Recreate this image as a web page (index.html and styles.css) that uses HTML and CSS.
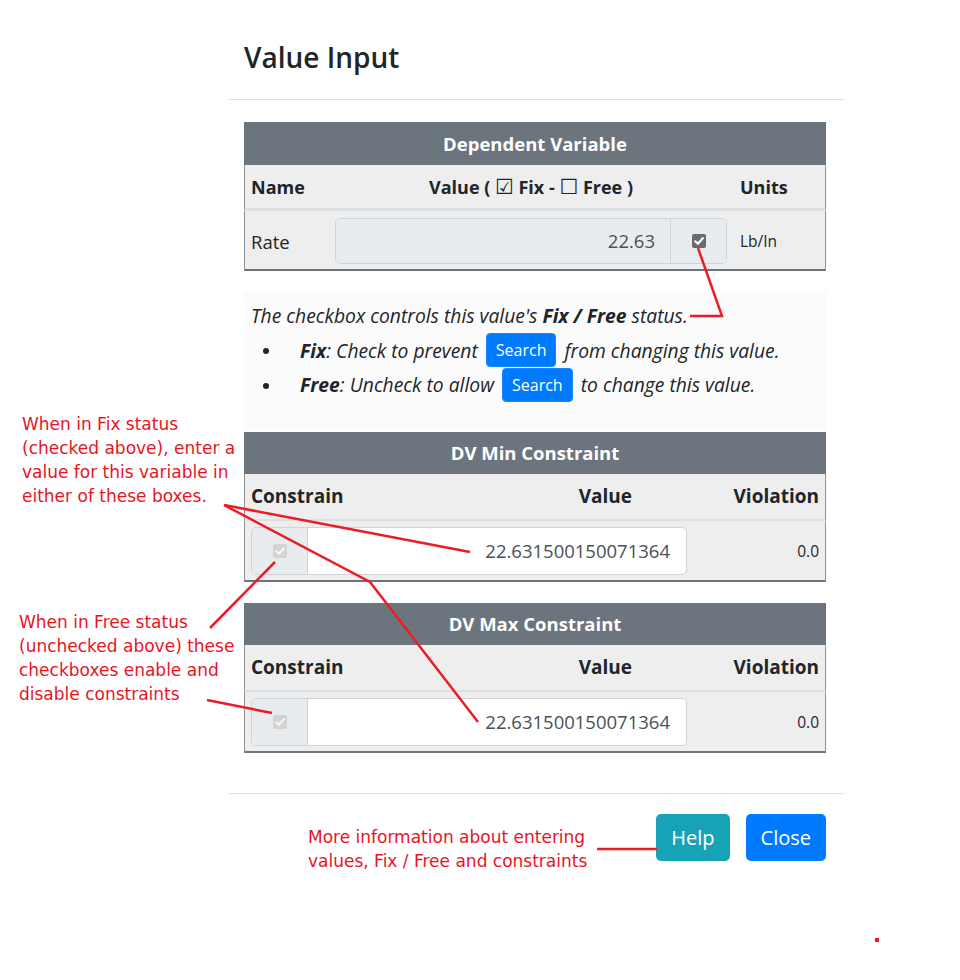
FILE: index.html
```html
<!DOCTYPE html>
<html>
<head>
<meta charset="utf-8">
<link rel="stylesheet" href="styles.css">
</head>
<body>
<div class="modal">
  <div class="modal-header"><h5 class="modal-title">Value Input</h5></div>
  <div class="modal-body">
    <div class="tbl">
      <div class="sec-title">Dependent Variable</div>
      <div class="thead dv-grid">
        <div class="c-name">Name</div>
        <div class="c-val">Value ( <span class="glyph">☑</span> Fix - <span class="glyph">☐</span> Free )</div>
        <div class="c-units">Units</div>
      </div>
      <div class="tbody dv-grid">
        <div class="c-name name">Rate</div>
        <div class="c-val">
          <div class="igroup">
            <div class="ifield disabled">22.63</div>
            <div class="addon addon-r"><span class="cb cb-on"><svg viewBox="0 0 14 14" width="14" height="14"><path d="M3.2 7.3 L5.9 9.8 L10.8 4.2" fill="none" stroke="#fff" stroke-width="2.2" stroke-linecap="round" stroke-linejoin="round"/></svg></span></div>
          </div>
        </div>
        <div class="c-units units">Lb/In</div>
      </div>
    </div>

    <div class="explain">
      <p class="ex-p">The checkbox controls this value's <b>Fix / Free</b> status.</p>
      <ul class="ex-list">
        <li><b>Fix</b>: Check to prevent <span class="btn-sm">Search</span> from changing this value.</li>
        <li><b>Free</b>: Uncheck to allow <span class="btn-sm">Search</span> to change this value.</li>
      </ul>
    </div>

    <div class="tbl tbl-c">
      <div class="sec-title">DV Min Constraint</div>
      <div class="thead c-grid">
        <div class="h-con">Constrain</div>
        <div class="h-val">Value</div>
        <div class="h-vio">Violation</div>
      </div>
      <div class="tbody c-grid c-body">
        <div class="igroup ig-c">
          <div class="addon addon-l"><span class="cb cb-dis"><svg viewBox="0 0 14 14" width="14" height="14"><path d="M3.2 7.3 L5.9 9.8 L10.8 4.2" fill="none" stroke="#f4f4f4" stroke-width="2.2" stroke-linecap="round" stroke-linejoin="round"/></svg></span></div>
          <div class="ifield">22.631500150071364</div>
        </div>
        <div class="vio">0.0</div>
      </div>
    </div>

    <div class="tbl tbl-c tbl-max">
      <div class="sec-title">DV Max Constraint</div>
      <div class="thead c-grid">
        <div class="h-con">Constrain</div>
        <div class="h-val">Value</div>
        <div class="h-vio">Violation</div>
      </div>
      <div class="tbody c-grid c-body">
        <div class="igroup ig-c">
          <div class="addon addon-l"><span class="cb cb-dis"><svg viewBox="0 0 14 14" width="14" height="14"><path d="M3.2 7.3 L5.9 9.8 L10.8 4.2" fill="none" stroke="#f4f4f4" stroke-width="2.2" stroke-linecap="round" stroke-linejoin="round"/></svg></span></div>
          <div class="ifield">22.631500150071364</div>
        </div>
        <div class="vio">0.0</div>
      </div>
    </div>
  </div>
  <div class="modal-footer">
    <span class="btn btn-help">Help</span>
    <span class="btn btn-close">Close</span>
  </div>
</div>

<div class="note note-fix">When in Fix status<br>(checked above), enter a<br>value for this variable in<br>either of these boxes.</div>
<div class="note note-free">When in Free status<br>(unchecked above) these<br>checkboxes enable and<br>disable constraints</div>
<div class="note note-help">More information about entering<br>values, Fix / Free and constraints</div>

<svg class="arrows" width="960" height="980" viewBox="0 0 960 980">
  <g fill="none" stroke="#ed1c24" stroke-width="2.5" stroke-linejoin="miter">
    <path d="M698 248 L722 316 L690 316"/>
    <path d="M224 505 L470 552"/>
    <path d="M224 505 L370 582 L478 722"/>
    <path d="M275 562 L210 628"/>
    <path d="M207 700 L272 713"/>
    <path d="M597 849 L657 849"/>
  </g>
  <rect x="875" y="938" width="4" height="4" fill="#ed1c24"/>
</svg>
</body>
</html>
```
FILE: styles.css
```css
html, body {
  margin: 0;
  padding: 0;
  background: #ffffff;
}
body {
  position: relative;
  width: 960px;
  height: 980px;
  font-family: "Open Sans", "Noto Sans", sans-serif;
  font-size: 18px;
  color: #212529;
}
.modal {
  margin-left: 228px;
  width: 617px;
}
.modal-header {
  height: 100px;
  border-bottom: 1px solid #dee2e6;
  padding: 0 16px;
  box-sizing: border-box;
}
.modal-title {
  margin: 0;
  padding-top: 39px;
  font-size: 28px;
  line-height: 36px;
  font-weight: 600;
  color: #212529;
}
.modal-body {
  padding: 22px 19px 40px 16px;
}
.tbl {
  width: 582px;
}
.sec-title {
  background: #6c757d;
  color: #ffffff;
  font-weight: 700;
  text-align: center;
  font-size: 18.5px;
  height: 43px;
  line-height: 43px;
}
.thead {
  background: #eeeeee;
  border-left: 1px solid #8e9397;
  border-right: 1px solid #8e9397;
  border-bottom: 3px solid #dde0e3;
  height: 43px;
  font-weight: 700;
  align-items: center;
}
.tbody {
  background: #eeeeee;
  border-left: 1px solid #8e9397;
  border-right: 1px solid #8e9397;
  border-bottom: 2px solid #6c757d;
  align-items: center;
}
.dv-grid {
  display: grid;
  grid-template-columns: 90px 392px 1fr;
}
.dv-grid .c-name { padding-left: 6px; }
.dv-grid .c-val { text-align: center; }
.dv-grid .c-units { padding-left: 13px; }
.glyph {
  font-family: "DejaVu Sans", sans-serif;
  font-weight: 400;
  font-size: 21px;
}
.dv-grid.tbody {
  padding: 7px 0 5px;
}
.name { font-weight: 400; font-size: 18.5px; }
.units { font-size: 15.5px; }
.igroup {
  display: flex;
  height: 46px;
  border: 1px solid #ced4da;
  border-radius: 5px;
  box-sizing: border-box;
  overflow: hidden;
  background: #ffffff;
}
.ifield {
  flex: 1;
  text-align: right;
  padding-right: 15px;
  line-height: 44px;
  font-size: 18.5px;
  color: #495057;
}
.ifield.disabled {
  background: #e9ecef;
}
.addon {
  width: 55px;
  background: #e9ecef;
  display: flex;
  align-items: center;
  justify-content: center;
}
.addon-r { border-left: 1px solid #ced4da; }
.addon-l { border-right: 1px solid #ced4da; }
.cb {
  width: 14px;
  height: 14px;
  border-radius: 2px;
  display: block;
}
.cb svg { display: block; }
.cb-on { background: #6b6b6b; }
.cb-dis { background: #d3d3d3; }

.explain {
  margin-top: 20px;
  background: #fbfbfb;
  padding: 8px 7px 27px;
  font-style: italic;
  font-size: 19.3px;
  line-height: 34.5px;
}
.ex-p { margin: 0; }
.ex-list {
  margin: 0;
  padding-left: 12px;
  list-style: none;
}
.ex-list li::before {
  content: "";
  display: inline-block;
  width: 6px;
  height: 6px;
  border-radius: 50%;
  background: #212529;
  margin-right: 31px;
  vertical-align: middle;
  position: relative;
  top: -1px;
}
.btn-sm {
  display: inline-block;
  background: #007bff;
  color: #ffffff;
  font-style: normal;
  font-size: 16px;
  line-height: 32px;
  padding: 0 9px;
  border-radius: 4px;
  border: 1px solid #1a86ff;
  vertical-align: middle;
  margin: -4px 3px 0;
}
.tbl-c {
  margin-top: 2px;
}
.tbl-max {
  margin-top: 21px;
}
.tbl-c .sec-title {
  height: 42px;
  line-height: 42px;
}
.c-grid {
  display: grid;
  grid-template-columns: 442px 1fr;
}
.thead.c-grid {
  grid-template-columns: 150px 237px 1fr;
  height: 45px;
  border-bottom-width: 2px;
  font-size: 19px;
}
.h-con { padding-left: 6px; }
.h-val { text-align: right; }
.h-vio { text-align: right; padding-right: 6px; }
.c-body {
  padding: 6px 0 5px;
}
.ig-c {
  height: 48px;
  margin-left: 6px;
  width: 436px;
}
.ig-c .ifield {
  line-height: 46px;
  padding-right: 16px;
}
.ig-c .addon { width: 55px; }
.vio {
  text-align: right;
  padding-right: 6px;
  font-size: 15.5px;
}
.modal-footer {
  border-top: 1px solid #dee2e6;
  padding: 20px 19px 20px;
  display: flex;
  justify-content: flex-end;
  gap: 16px;
}
.btn {
  display: inline-block;
  height: 47px;
  line-height: 47px;
  padding: 0 15px;
  border-radius: 5px;
  color: #ffffff;
  font-size: 20px;
}
.btn-help { background: #17a2b8; }
.btn-close { background: #007bff; }

.note {
  position: absolute;
  font-family: "DejaVu Sans", sans-serif;
  font-size: 17px;
  line-height: 24px;
  color: #e8141f;
}
.note-fix { left: 22px; top: 412px; }
.note-free { left: 19px; top: 610px; }
.note-help { left: 308px; top: 825px; }
.arrows {
  position: absolute;
  left: 0;
  top: 0;
  pointer-events: none;
}
```
